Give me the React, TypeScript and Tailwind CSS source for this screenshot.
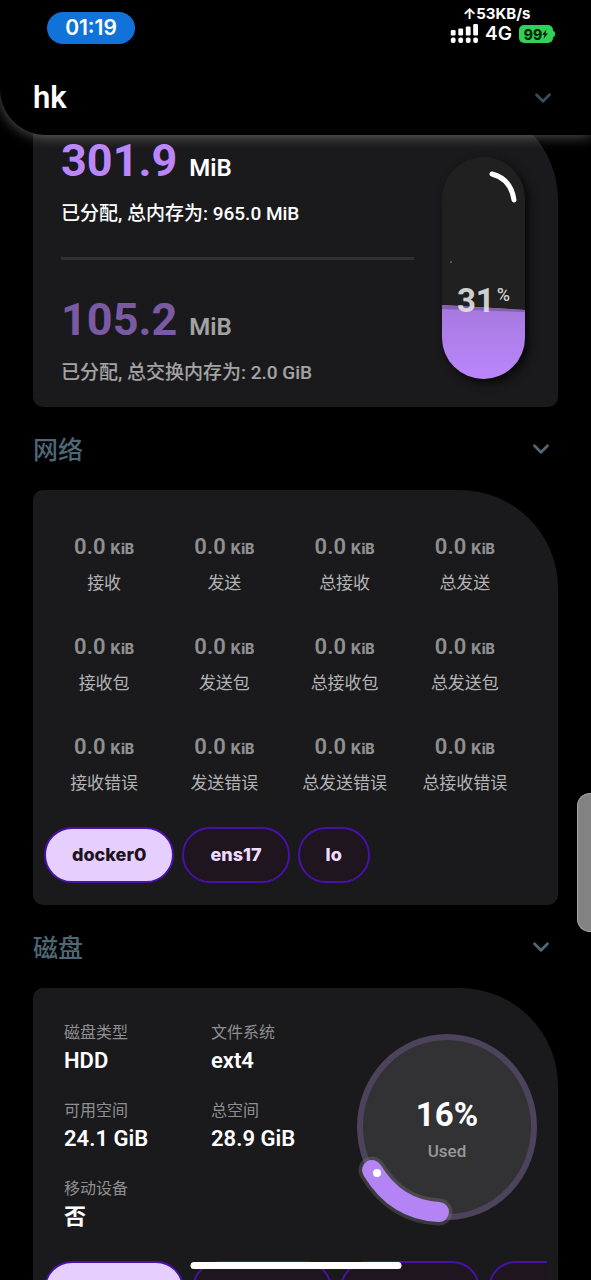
import { useState } from 'react';
import { ChevronDown } from 'lucide-react';

const networkStats = [
  '接收',
  '发送',
  '总接收',
  '总发送',
  '接收包',
  '发送包',
  '总接收包',
  '总发送包',
  '接收错误',
  '发送错误',
  '总发送错误',
  '总接收错误',
];

const diskInfo = [
  { label: '磁盘类型', value: 'HDD' },
  { label: '文件系统', value: 'ext4' },
  { label: '可用空间', value: '24.1 GiB' },
  { label: '总空间', value: '28.9 GiB' },
  { label: '移动设备', value: '否' },
];

const interfaces = ['docker0', 'ens17', 'lo'];
const disks = ['/dev/vda1', '/dev/vda2', '/dev/vda3', '/dev/vda4'];

const cardStyles = 'rounded-[10px] rounded-tr-[98px] bg-[#1a1a1c]';

function StatusBar() {
  return (
    <div className="flex items-start justify-between pt-1 pr-9 pl-[47px]">
      <div className="mt-2 flex h-8 w-[88px] items-center justify-center rounded-full bg-[#1173d9] font-['Inter'] text-[21px] font-semibold text-white">
        01:19
      </div>
      <div className="flex flex-col font-['Inter'] font-semibold text-white">
        <div className="flex h-5 items-center justify-center pr-3 text-[15px] leading-4 font-bold">↑53KB/s</div>
        <div className="flex h-5 items-center gap-[7px]">
          {/* Dual SIM signal */}
          <svg width="28" height="20" viewBox="0 0 28 20" fill="#fff">
            <rect x="0.8" y="6" width="4.8" height="5.4" rx="1.2" />
            <rect x="8.3" y="4.4" width="4.8" height="7" rx="1.2" />
            <rect x="15.8" y="2.4" width="4.8" height="9" rx="1.2" />
            <rect x="23.2" y="0" width="4.8" height="11.4" rx="1.2" />
            <rect x="0.8" y="13.6" width="4.8" height="5.4" rx="2" />
            <rect x="8.3" y="13.6" width="4.8" height="5.4" rx="2" />
            <rect x="15.8" y="13.6" width="4.8" height="5.4" rx="2" />
            <rect x="23.2" y="13.6" width="4.8" height="5.4" rx="2" />
          </svg>
          <span className="text-[19px] leading-5">4G</span>
          <div className="flex items-center">
            <div className="flex h-[18px] w-[34px] items-center justify-center rounded-[5px] bg-[#30d158] text-[14px] font-extrabold text-[#06240e]">
              99
              <svg width="6" height="10" viewBox="0 0 6 10" fill="#06240e">
                <path d="M4.4 0.4 0 5.8h2.4L1.6 9.8 6 4.4H3.5z" />
              </svg>
            </div>
            <div className="h-[6px] w-[2px] rounded-r-full bg-[#30d158]" />
          </div>
        </div>
      </div>
    </div>
  );
}

function SectionTitle({ title }: { title: string }) {
  return (
    <div className="flex h-[83px] items-center justify-between pr-1">
      <h2 className="pt-1 text-[25px] font-medium text-[#4d6775]">{title}</h2>
      <button type="button" aria-label={title}>
        <ChevronDown size={26} color="#4d6775" strokeWidth={2.6} />
      </button>
    </div>
  );
}

function MemoryBlock({ value, note, dim }: { value: string; note: string; dim?: boolean }) {
  return (
    <div className={dim ? 'opacity-60' : ''}>
      <div className="flex h-12 items-baseline gap-3">
        <span className="text-[45px] leading-[48px] font-bold text-[#bb86fc]">{value}</span>
        <span className="text-[24px] leading-6 font-semibold text-white">MiB</span>
      </div>
      <p className="mt-[15px] text-[19px] leading-7 font-medium text-white">{note}</p>
    </div>
  );
}

function MemoryCapsule() {
  return (
    <div className="relative mb-2 h-[222px] w-[83px] shrink-0 overflow-hidden rounded-full bg-[#202020] shadow-[4px_4px_10px_rgba(0,0,0,0.7)]">
      <svg className="block" width="83" height="222" viewBox="0 0 83 222">
        <defs>
          <linearGradient id="liquid" x1="0" y1="0" x2="0" y2="1">
            <stop offset="0" stopColor="#a678de" />
            <stop offset="1" stopColor="#bb86fc" />
          </linearGradient>
        </defs>
        <path d="M0 148 83 153V222H0z" fill="url(#liquid)" />
        <path d="M0 148 83 153V155L0 152z" fill="#8360b0" />
        <path d="M50 17Q69 22 72 43" fill="none" stroke="#fff" strokeWidth="5" strokeLinecap="round" />
        <circle cx="9" cy="105" r="1" fill="#666" />
      </svg>
      <div className="absolute inset-x-0 top-[128px] flex justify-center text-[#e6e6e6]/90">
        <span className="text-[33px] leading-8 font-bold">31</span>
        <span className="pl-[2px] text-[18px] leading-5 font-medium">%</span>
      </div>
    </div>
  );
}

function DiskGauge() {
  return (
    <div className="relative shrink-0">
      <svg className="block" width="190" height="206" viewBox="0 0 190 206">
        <ellipse cx="95" cy="103" rx="87" ry="90" fill="#323234" stroke="#4d435c" strokeWidth="6" />
        <path
          d="M20 146Q44 186 87 188"
          fill="none"
          stroke="#777"
          strokeOpacity="0.35"
          strokeWidth="27"
          strokeLinecap="round"
        />
        <path d="M20 146Q44 186 87 188" fill="none" stroke="#b584f4" strokeWidth="20" strokeLinecap="round" />
        <circle cx="25" cy="149" r="4" fill="#fff" />
      </svg>
      <div className="absolute inset-0 flex flex-col items-center justify-center">
        <span className="pt-2 text-[33px] leading-10 font-bold text-white">16%</span>
        <span className="text-[17px] leading-8 font-medium text-[#98989a]">Used</span>
      </div>
    </div>
  );
}

function PillRow({ items, wide }: { items: string[]; wide?: boolean }) {
  const [selected, setSelected] = useState(items[0]);

  return (
    <div className="flex gap-2 overflow-hidden">
      {items.map((item) => (
        <button
          key={item}
          type="button"
          onClick={() => setSelected(item)}
          className={`h-14 shrink-0 rounded-full border-2 border-[#4812a8] font-['Inter'] text-[18px] leading-4 font-extrabold ${
            wide ? 'w-[140px]' : 'px-[26px]'
          } ${selected === item ? 'bg-[#e6cfff] text-[#1d1320]' : 'bg-[#1e151f] text-[#f0dcff]'}`}
        >
          {item}
        </button>
      ))}
    </div>
  );
}

export default function App() {
  return (
    <div className="relative flex h-screen flex-col overflow-hidden bg-black font-['Roboto','Noto_Sans_CJK_SC',sans-serif]">
      <header className="relative z-10 flex h-[135px] shrink-0 flex-col rounded-bl-[46px] bg-black shadow-[0_1px_14px_rgba(255,255,255,0.35)]">
        <StatusBar />
        <div className="mt-[34px] flex items-center justify-between pr-[35px] pl-[33px]">
          <h1 className="text-[31px] leading-10 font-semibold text-white">hk</h1>
          <button type="button" aria-label="hk">
            <ChevronDown size={26} color="#3b4d58" strokeWidth={2.6} />
          </button>
        </div>
      </header>

      <main className="-mt-[33px] min-h-0 flex-1 overflow-hidden px-[33px]">
        <section className={`flex items-end gap-7 pt-[35px] pr-[33px] pb-5 pl-7 ${cardStyles}`}>
          <div className="flex-1">
            <MemoryBlock value="301.9" note="已分配, 总内存为: 965.0 MiB" />
            <div className="mt-[29px] mb-9 h-[3px] bg-[#303032]" />
            <MemoryBlock value="105.2" note="已分配, 总交换内存为: 2.0 GiB" dim />
          </div>
          <MemoryCapsule />
        </section>

        <SectionTitle title="网络" />
        <section className={`px-[11px] pt-[43px] pb-[22px] ${cardStyles}`}>
          <div className="mr-[22px] grid grid-cols-4 gap-y-[38px]">
            {networkStats.map((label) => (
              <div key={label} className="flex flex-col items-center gap-[10px] whitespace-nowrap">
                <div className="flex h-7 items-baseline gap-[5px] text-[#8f8f91]">
                  <span className="text-[22px] leading-7 font-semibold">0.0</span>
                  <span className="font-['Inter'] text-[14px] leading-4 font-extrabold">KiB</span>
                </div>
                <span className="text-[17px] leading-6 text-[#b4b4b6]">{label}</span>
              </div>
            ))}
          </div>
          <div className="mt-8">
            <PillRow items={interfaces} />
          </div>
        </section>

        <SectionTitle title="磁盘" />
        <section className={`px-[11px] pt-[33px] pb-[22px] ${cardStyles}`}>
          <div className="flex items-center pr-[5px] pl-5">
            <div className="grid flex-1 grid-cols-[147px_1fr] gap-y-[22px]">
              {diskInfo.map(({ label, value }) => (
                <div key={label} className="flex flex-col whitespace-nowrap">
                  <span className="text-[16px] leading-6 text-[#8f8f91]">{label}</span>
                  <span className="text-[22px] leading-8 font-semibold text-white">{value}</span>
                </div>
              ))}
            </div>
            <DiskGauge />
          </div>
          <div className="mt-7">
            <PillRow items={disks} wide />
          </div>
        </section>
      </main>

      {/* Edge handle and home indicator */}
      <div className="absolute top-[793px] right-0 z-20 h-[139px] w-[14px] rounded-l-[13px] border border-r-0 border-[#a8a8a8] bg-[#828282]" />
      <div className="absolute bottom-[11px] left-1/2 z-20 h-[7px] w-[211px] -translate-x-1/2 rounded-full bg-white" />
    </div>
  );
}
